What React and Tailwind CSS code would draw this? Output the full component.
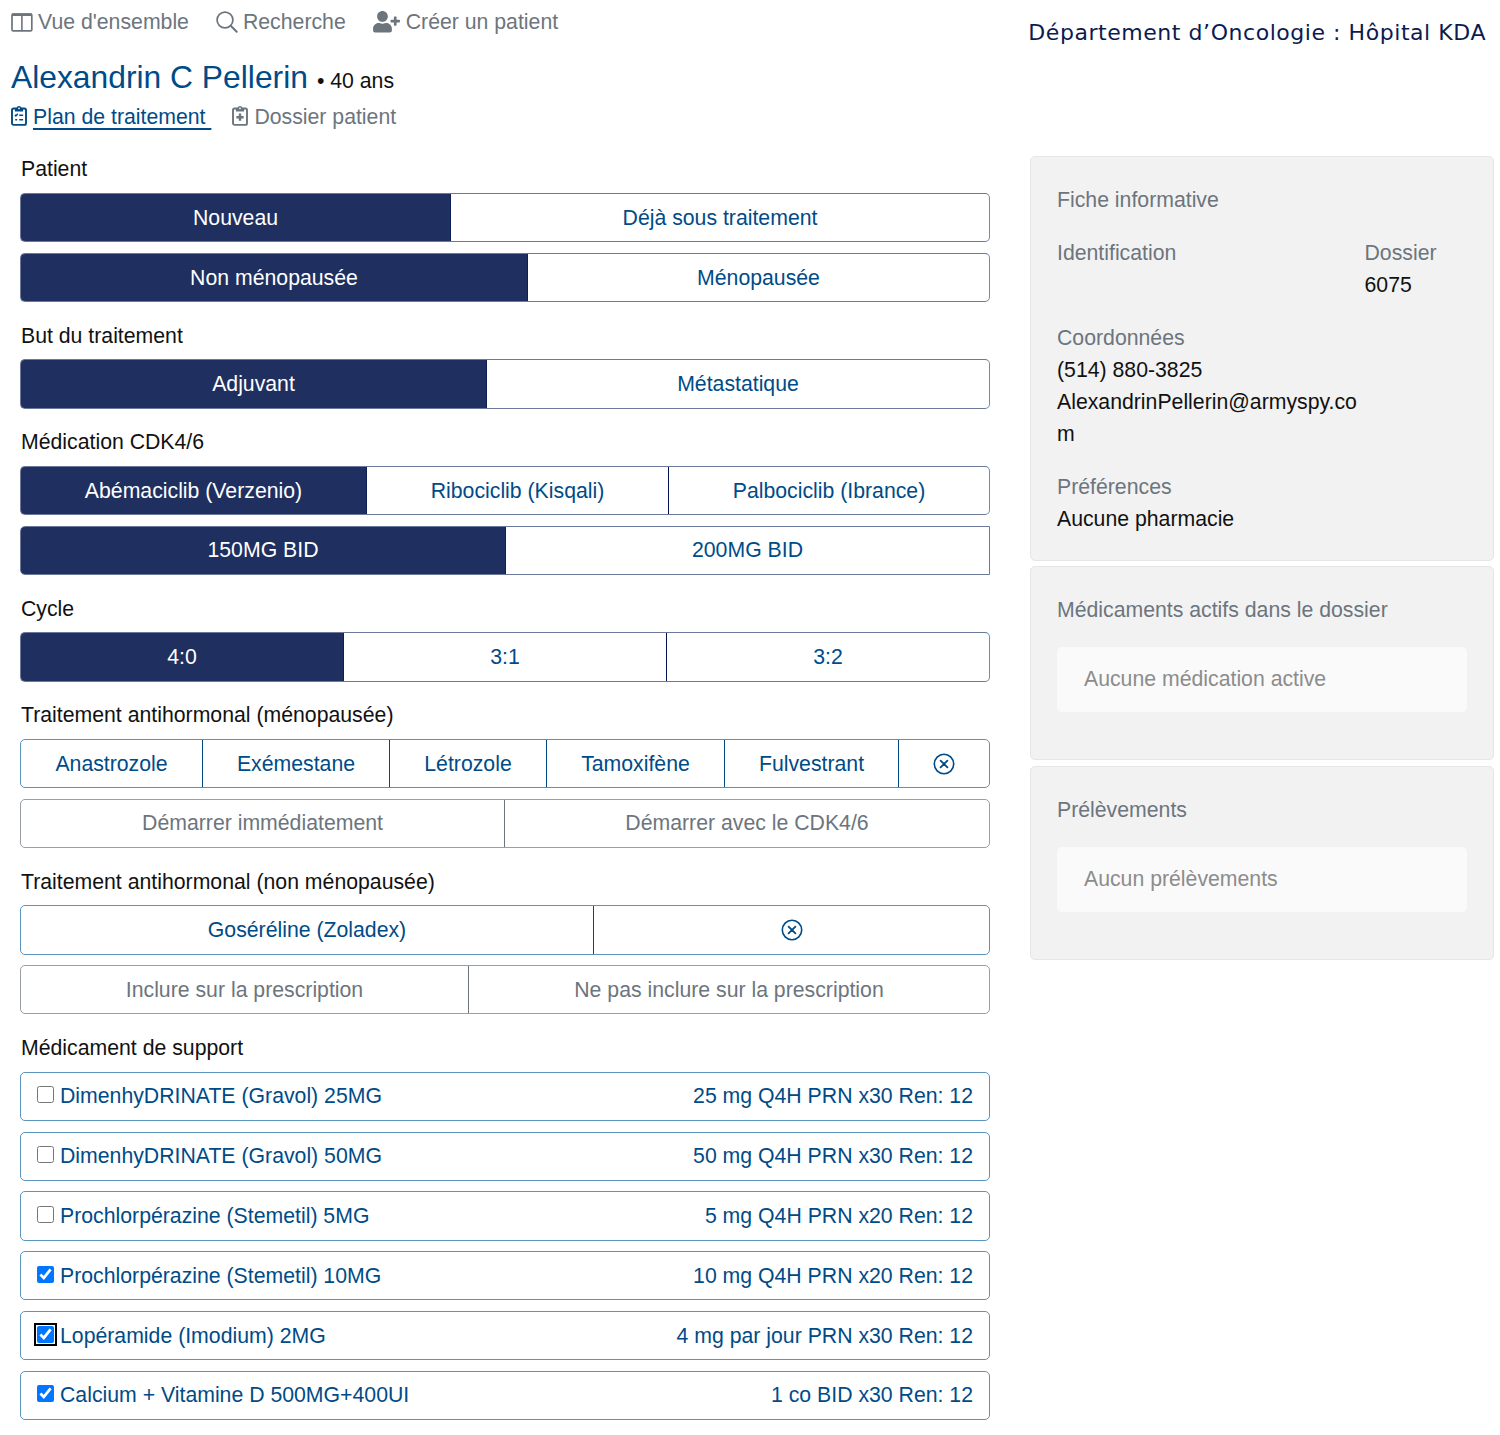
import React, { useState } from 'react';
import { FaUserPlus } from 'react-icons/fa';

const tones = {
  navy: 'border-[#6b7899] text-[#004b87]',
  blue: 'border-[#5a93bc] text-[#004b87]',
  gray: 'border-[#9a9fa6] text-[#6c757d]',
};

const dividers = {
  navy: 'border-l-[#00134f]',
  blue: 'border-l-[#004b87]',
  gray: 'border-l-[#6c757d]',
};

const sections = [
  {
    title: 'Patient',
    rows: [
      {
        tone: 'navy',
        active: 0,
        options: [
          { label: 'Nouveau', width: 'w-[431px]' },
          { label: 'Déjà sous traitement', width: 'flex-1' },
        ],
      },
      {
        tone: 'navy',
        active: 0,
        options: [
          { label: 'Non ménopausée', width: 'w-[508px]' },
          { label: 'Ménopausée', width: 'flex-1' },
        ],
      },
    ],
  },
  {
    title: 'But du traitement',
    rows: [
      {
        tone: 'navy',
        active: 0,
        options: [
          { label: 'Adjuvant', width: 'w-[467px]' },
          { label: 'Métastatique', width: 'flex-1' },
        ],
      },
    ],
  },
  {
    title: 'Médication CDK4/6',
    rows: [
      {
        tone: 'navy',
        active: 0,
        options: [
          { label: 'Abémaciclib (Verzenio)', width: 'w-[347px]' },
          { label: 'Ribociclib (Kisqali)', width: 'w-[301px]' },
          { label: 'Palbociclib (Ibrance)', width: 'flex-1' },
        ],
      },
      {
        tone: 'navy',
        active: 0,
        square: true,
        options: [
          { label: '150MG BID', width: 'w-[486px]' },
          { label: '200MG BID', width: 'flex-1' },
        ],
      },
    ],
  },
  {
    title: 'Cycle',
    rows: [
      {
        tone: 'navy',
        active: 0,
        options: [
          { label: '4:0', width: 'w-[324px]' },
          { label: '3:1', width: 'w-[322px]' },
          { label: '3:2', width: 'flex-1' },
        ],
      },
    ],
  },
  {
    title: 'Traitement antihormonal (ménopausée)',
    rows: [
      {
        tone: 'blue',
        options: [
          { label: 'Anastrozole', width: 'w-[181px]' },
          { label: 'Exémestane', width: 'w-[187px]' },
          { label: 'Létrozole', width: 'w-[157px]' },
          { label: 'Tamoxifène', width: 'w-[178px]' },
          { label: 'Fulvestrant', width: 'w-[174px]' },
          { label: null, width: 'flex-1' },
        ],
      },
      {
        tone: 'gray',
        options: [
          { label: 'Démarrer immédiatement', width: 'w-[483px]' },
          { label: 'Démarrer avec le CDK4/6', width: 'flex-1' },
        ],
      },
    ],
  },
  {
    title: 'Traitement antihormonal (non ménopausée)',
    rows: [
      {
        tone: 'blue',
        options: [
          { label: 'Goséréline (Zoladex)', width: 'w-[572px]' },
          { label: null, width: 'flex-1' },
        ],
      },
      {
        tone: 'gray',
        options: [
          { label: 'Inclure sur la prescription', width: 'w-[447px]' },
          { label: 'Ne pas inclure sur la prescription', width: 'flex-1' },
        ],
      },
    ],
  },
];

const supportMeds = [
  { name: 'DimenhyDRINATE (Gravol) 25MG', dose: '25 mg Q4H PRN x30 Ren: 12', checked: false },
  { name: 'DimenhyDRINATE (Gravol) 50MG', dose: '50 mg Q4H PRN x30 Ren: 12', checked: false },
  { name: 'Prochlorpérazine (Stemetil) 5MG', dose: '5 mg Q4H PRN x20 Ren: 12', checked: false },
  { name: 'Prochlorpérazine (Stemetil) 10MG', dose: '10 mg Q4H PRN x20 Ren: 12', checked: true },
  { name: 'Lopéramide (Imodium) 2MG', dose: '4 mg par jour PRN x30 Ren: 12', checked: true, focused: true },
  { name: 'Calcium + Vitamine D 500MG+400UI', dose: '1 co BID x30 Ren: 12', checked: true },
];

const ColumnsIcon = () => (
  <svg width="22" height="19" viewBox="0 0 22 19" fill="none" stroke="currentColor">
    <rect x="1" y="1" width="19.8" height="16.9" rx="1.2" strokeWidth="1.7" />
    <path d="M1 1.7h19.8" strokeWidth="2.6" />
    <path d="M10.9 2v16" strokeWidth="1.6" />
  </svg>
);

const SearchIcon = () => (
  <svg width="22" height="22" viewBox="0 0 22 22" fill="none" stroke="currentColor" strokeLinecap="round">
    <circle cx="9" cy="9" r="7.9" strokeWidth="1.7" />
    <path d="m14.7 14.7 6 6" strokeWidth="2" />
  </svg>
);

const CircleXIcon = () => (
  <svg width="22" height="22" viewBox="0 0 22 22" fill="none" stroke="currentColor" strokeLinecap="round">
    <circle cx="11" cy="11" r="9.7" strokeWidth="1.6" />
    <path d="m7.6 7.6 6.8 6.8M14.4 7.6l-6.8 6.8" strokeWidth="1.8" />
  </svg>
);

const ClipboardIcon = ({ children }) => (
  <svg className="-mt-[3px]" width="16" height="21" viewBox="0 0 16 21" fill="none" stroke="currentColor">
    <rect x="1" y="3.5" width="14" height="16.4" rx="1.6" strokeWidth="1.9" />
    <path d="M3.9 3h1.6a2.6 2.6 0 0 1 5 0h1.6v3.6H3.9z" fill="currentColor" stroke="none" />
    <circle cx="8" cy="3.3" r="0.9" fill="#fff" stroke="none" />
    {children}
  </svg>
);

const OptionRow = ({ row }) => {
  const [active, setActive] = useState(row.active ?? null);

  return (
    <div
      className={`flex h-[49.3px] overflow-hidden border ${tones[row.tone]} ${
        row.square ? 'rounded-l-[5px]' : 'rounded-[5px]'
      } ${row.tone === 'navy' && !row.square ? 'border-r-[#5a93bc]' : ''}`}
    >
      {row.options.map((option, index) => (
        <button
          key={index}
          type="button"
          onClick={() => setActive(index)}
          className={`flex items-center justify-center ${option.width} ${
            index > 0 && active !== index - 1 ? `border-l ${dividers[row.tone]}` : ''
          } ${active === index ? '-my-px -ml-px border border-[#0d1f55] bg-[#1f3060] text-white' : ''} ${
            active === index && index === 0 ? 'rounded-l-[5px]' : ''
          }`}
        >
          {option.label ?? <CircleXIcon />}
        </button>
      ))}
    </div>
  );
};

const SupportRow = ({ med }) => {
  const [checked, setChecked] = useState(med.checked);

  return (
    <label className="flex h-[49.3px] items-center rounded-[5px] border border-[#5a93bc] px-4 text-[#004b87]">
      <input
        type="checkbox"
        checked={checked}
        onChange={() => setChecked(!checked)}
        className={`-mt-[3px] mr-[6px] size-[17px] ${
          med.focused ? 'rounded-[3px] outline-2 outline-offset-1 outline-black' : ''
        }`}
      />
      <span className="flex-1">{med.name}</span>
      <span>{med.dose}</span>
    </label>
  );
};

const Card = ({ title, children, className }) => (
  <div className={`rounded-[5px] border border-[#e6e6e6] bg-[#f2f2f2] px-[26px] pt-[26.4px] ${className}`}>
    <h2 className="text-[#6c757d]">{title}</h2>
    {children}
  </div>
);

const EmptyNote = ({ children }) => (
  <div className="mt-[21px] flex h-[65px] items-center rounded-[5px] bg-[#fafafa] px-[27px] text-[#8c8c8c]">
    {children}
  </div>
);

const App = () => {
  return (
    <div className="h-[1435px] w-[1500px] overflow-hidden bg-white font-['Liberation_Sans',Arial,sans-serif] text-[21.25px] leading-8 text-[#111]">
      <header className="flex h-[137px] justify-between pr-[14px] pl-[11px]">
        <div>
          <nav className="flex h-[44px] items-center text-[#6c757d]">
            <a className="flex items-center gap-[5px]">
              <ColumnsIcon />
              Vue d'ensemble
            </a>
            <a className="ml-[27px] flex items-center gap-[5px]">
              <SearchIcon />
              Recherche
            </a>
            <a className="ml-[27px] flex items-center gap-[6px]">
              <FaUserPlus className="h-[21.5px] w-[27px]" />
              Créer un patient
            </a>
          </nav>
          <div className="mt-[13px] flex h-10 items-baseline">
            <h1 className="text-[31.8px] leading-10 text-[#004b87]">Alexandrin C Pellerin</h1>
            <span className="ml-[9px]">• 40 ans</span>
          </div>
          <nav className="mt-1 flex h-8 items-center">
            <a className="flex items-center gap-[6px] text-[#004b87]">
              <ClipboardIcon>
                <path d="m3.9 9.9 1 1 1.9-2.1M8.2 10.3h3.9M8.2 14.7h3.9M4.2 14.7h2" strokeWidth="1.5" />
              </ClipboardIcon>
              <span className="whitespace-pre underline decoration-2 underline-offset-4">Plan de traitement </span>
            </a>
            <a className="ml-[21px] flex items-center gap-[6px] text-[#6c757d]">
              <ClipboardIcon>
                <path d="M8 8.6v7.2M4.4 12.2h7.2" strokeWidth="2.4" />
              </ClipboardIcon>
              Dossier patient
            </a>
          </nav>
        </div>
        <div className="pt-[17px] font-['DejaVu_Sans',Verdana,sans-serif] text-[22px] tracking-[0.55px] text-[#0b1b52]">
          Département d’Oncologie : Hôpital KDA
        </div>
      </header>

      <div className="flex">
        <main className="ml-5 w-[970px] pt-[16.4px]">
          {sections.map((section) => (
            <section key={section.title} className="mb-[17.6px]">
              <h3 className="mb-[7.7px] h-8 pl-px">{section.title}</h3>
              <div className="flex flex-col gap-[10.5px]">
                {section.rows.map((row, index) => (
                  <OptionRow key={index} row={row} />
                ))}
              </div>
            </section>
          ))}
          <section>
            <h3 className="mb-[7.7px] h-8 pl-px">Médicament de support</h3>
            <div className="flex flex-col gap-[10.5px]">
              {supportMeds.map((med) => (
                <SupportRow key={med.name} med={med} />
              ))}
            </div>
          </section>
        </main>

        <aside className="ml-10 flex w-[464px] flex-col gap-[5.7px] pt-[19.3px]">
          <Card title="Fiche informative" className="h-[404.5px]">
            <div className="mt-[21px] grid grid-cols-[307.5px_1fr]">
              <div className="text-[#6c757d]">Identification</div>
              <div>
                <div className="text-[#6c757d]">Dossier</div>
                <div>6075</div>
              </div>
            </div>
            <div className="mt-[21px] w-[303px]">
              <div className="text-[#6c757d]">Coordonnées</div>
              <div>(514) 880-3825</div>
              <div className="break-all">AlexandrinPellerin@armyspy.com</div>
            </div>
            <div className="mt-[21px]">
              <div className="text-[#6c757d]">Préférences</div>
              <div>Aucune pharmacie</div>
            </div>
          </Card>
          <Card title="Médicaments actifs dans le dossier" className="h-[194px]">
            <EmptyNote>Aucune médication active</EmptyNote>
          </Card>
          <Card title="Prélèvements" className="h-[194px]">
            <EmptyNote>Aucun prélèvements</EmptyNote>
          </Card>
        </aside>
      </div>
    </div>
  );
};

export default App;
